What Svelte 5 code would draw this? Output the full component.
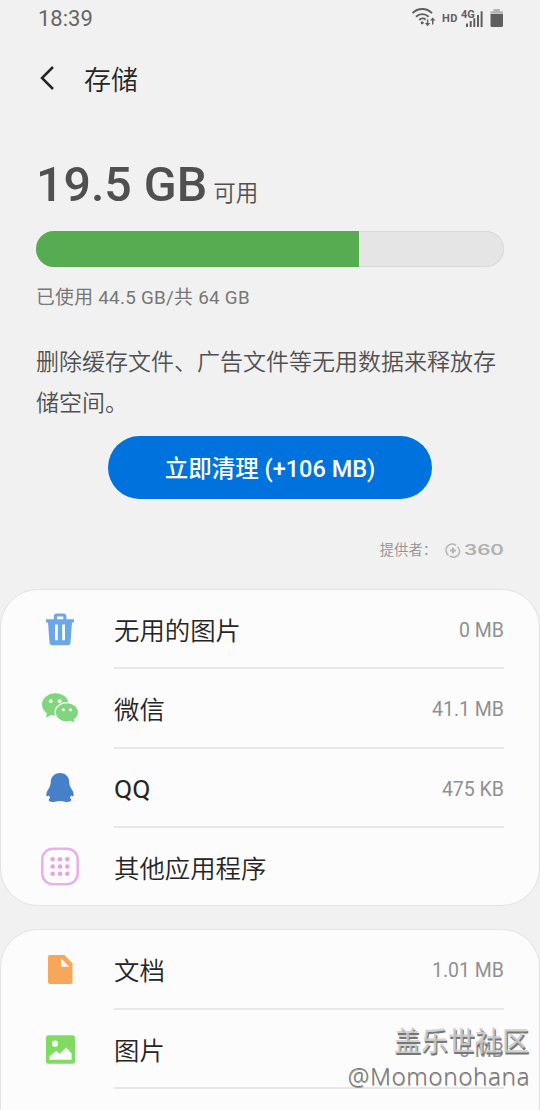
<script lang="ts">
	type Row = { icon: string; label: string; size: string };

	const used = 44.5;
	const total = 64;
	const free = 19.5;
	const fill = 69;

	const cleanup: Row[] = [
		{ icon: 'trash', label: '无用的图片', size: '0 MB' },
		{ icon: 'wechat', label: '微信', size: '41.1 MB' },
		{ icon: 'qq', label: 'QQ', size: '475 KB' },
		{ icon: 'apps', label: '其他应用程序', size: '' }
	];

	const files: Row[] = [
		{ icon: 'doc', label: '文档', size: '1.01 MB' },
		{ icon: 'image', label: '图片', size: '0 MB' },
		{ icon: '', label: '', size: '' }
	];

	const dots = [12.7, 20, 27.3];
</script>

{#snippet rowIcon(name: string)}
	<svg class="row-icon" viewBox="0 0 40 40" aria-hidden="true">
		{#if name === 'trash'}
			<path
				fill="#6ca8e8"
				fill-rule="evenodd"
				d="M6 9.3h7.8V6.4a3 3 0 0 1 3-3h6.6a3 3 0 0 1 3 3v2.9H34v3.2h-2l-1.5 20.3a2.5 2.5 0 0 1-2.5 2.4H12a2.5 2.5 0 0 1-2.5-2.4L8 12.5H6zM17 9.3h6.3V6.5H17zM15 14.5v15.7h2.8V14.5zM22.2 14.5v15.7H25V14.5z"
			/>
		{:else if name === 'wechat'}
			<path
				fill="#80d67d"
				d="M15.5 4.3C8 4.3 2 9.2 2 15.5c0 3.6 1.9 6.7 4.9 8.8L6 28.8l5.2-2.7c1.4.4 2.8.5 4.3.5 7.500 0 13.300-5 13.300-11.100S23 4.300 15.500 4.300z"
			/>
			<path
				fill="#80d67d"
				stroke="#fcfcfc"
				stroke-width="1.3"
				d="M26.8 13.6c-6.5 0-11.7 4.3-11.7 9.7s5.2 9.7 11.7 9.7c1.3 0 2.6-.2 3.7-.5l5 2.4-1.1-4.2c2.6-1.7 4.2-4.4 4.2-7.4 0-5.4-5.3-9.7-11.8-9.7z"
			/>
			<g fill="#fcfcfc">
				<circle cx="10.8" cy="12.2" r="1.9" />
				<circle cx="19.6" cy="12.2" r="1.9" />
				<circle cx="23.3" cy="20.8" r="1.5" />
				<circle cx="30.6" cy="20.8" r="1.5" />
			</g>
		{:else if name === 'qq'}
			<path
				fill="#477fc9"
				d="M20 4c-5.6 0-9.3 4-9.3 9.6 0 2-.6 3.3-1.3 4.9-1.7 2.7-3.3 5-3.1 7.6.1 1.5 1.2 1.6 2.7.5.3.9.7 1.5 1.2 2.1-1 .7-1.5 1.4-1.5 2.2 0 2.4 7.1 2.4 9.8 1.2.8-.2 2.2-.2 3 0 2.7 1.2 9.8 1.2 9.8-1.2 0-.8-.5-1.5-1.5-2.2.5-.6.9-1.2 1.2-2.1 1.5 1.1 2.6 1 2.7-.5.2-2.6-1.4-4.9-3.1-7.6-.7-1.6-1.3-2.9-1.3-4.9C29.3 8 25.6 4 20 4z"
			/>
		{:else if name === 'apps'}
			<rect
				x="2.3"
				y="1.8"
				width="35.4"
				height="35.4"
				rx="10.5"
				fill="none"
				stroke="#e9b2e6"
				stroke-width="2.6"
			/>
			{#each dots as y}
				{#each dots as x}
					<circle cx={x} cy={y - 0.5} r="2.3" fill="#e5a5e1" />
				{/each}
			{/each}
		{:else if name === 'doc'}
			<path
				fill="#f7a75a"
				d="M10 5h14.5l8 8.3V32a2 2 0 0 1-2 2H10a2 2 0 0 1-2-2V7a2 2 0 0 1 2-2z"
			/>
			<path fill="#fcfcfc" d="M21.2 8.5v8.2h7.9z" />
		{:else if name === 'image'}
			<rect x="6" y="5.3" width="29" height="28.5" rx="2.5" fill="#80dc60" />
			<circle cx="15" cy="13.7" r="3.1" fill="#fcfcfc" />
			<path fill="#fcfcfc" d="M9.5 29.8v-3.6l6.8-5.5 3.5 3 6.4-6.1 5.4 5.8v6.4z" />
		{/if}
	</svg>
{/snippet}

{#snippet card(rows: Row[])}
	<section class="card">
		{#each rows as row}
			<div class="row">
				{@render rowIcon(row.icon)}
				<div class="row-body">
					<span class="label" class:latin={row.label === 'QQ'}>{row.label}</span>
					<span class="size">{row.size}</span>
				</div>
			</div>
		{/each}
	</section>
{/snippet}

<main class="screen">
	<div class="status">
		<span class="time">18:39</span>
		<svg class="status-icons" viewBox="0 0 96 24" aria-hidden="true">
			<g fill="none" stroke="#5f5f5f" stroke-width="1.9">
				<path d="M1.5 9.2a13.5 13.5 0 0 1 19.5 0" />
				<path d="M5 12.7a9 9 0 0 1 12.6 0" />
				<path d="M8.3 16a4.6 4.6 0 0 1 6.3-.4" />
				<path d="M16.6 15.5v5M21.7 20.5v-5" stroke-width="1.4" />
			</g>
			<g fill="#5f5f5f">
				<circle cx="11.2" cy="18.7" r="1.5" />
				<path d="M13.9 19h5.4l-2.7 3.3zM19 16.6h5.4l-2.7-3.2z" />
				<path d="M55 19.5h2V23h-2zM58.7 17h2v6h-2zM62.3 14.2h2V23h-2zM66 11h2v12h-2zM69.6 7.2h2V23h-2z" />
				<path d="M79.5 10H92v11.5a1.5 1.5 0 0 1-1.5 1.5H81a1.5 1.5 0 0 1-1.5-1.5z" />
			</g>
			<path fill="#b5b5b5" d="M79.5 9.8V7.3h3V5H89v2.3h3v2.5z" />
			<text x="31" y="17.6" class="tiny" textLength="15.5">HD</text>
			<text x="50" y="13.5" class="tiny">4G</text>
		</svg>
	</div>

	<header>
		<svg class="back" viewBox="0 0 18 28" aria-hidden="true">
			<path d="M15 3L4 14l11 11" fill="none" stroke="#252525" stroke-width="2.5" />
		</svg>
		<h1>存储</h1>
	</header>

	<section class="summary">
		<p class="free"><strong>{free} GB</strong><span>可用</span></p>
		<div class="bar"><div class="bar-fill" style="width: {fill}%"></div></div>
		<p class="used">已使用 {used} GB/共 {total} GB</p>
		<p class="hint">删除缓存文件、广告文件等无用数据来释放存储空间。</p>
		<button>立即清理 (+106 MB)</button>
		<div class="provider">
			<span>提供者：</span>
			<svg viewBox="0 0 60 16" aria-label="360">
				<g fill="none" stroke="#b5b5b5">
					<path d="M4.5 13.3A6 6 0 0 1 12 3.3M13.5 4.7a6 6 0 0 1-7.7 9.2" stroke-width="1.5" />
					<path d="M9 5.6v6M6 8.6h6" stroke-width="2" />
				</g>
				<text x="20" y="13.3" textLength="40" lengthAdjust="spacingAndGlyphs">360</text>
			</svg>
		</div>
	</section>

	{@render card(cleanup)}
	{@render card(files)}

	<div class="watermark">
		<p class="site">盖乐世社区</p>
		<p class="user">@Momonohana</p>
	</div>
</main>

<style>
	:global(body) {
		background: #f1f1f1;
	}

	.screen {
		position: relative;
		width: 540px;
		height: 1110px;
		overflow: hidden;
		background: #f1f1f1;
		color: #252525;
		font-family: Roboto, 'Noto Sans CJK SC', sans-serif;
	}

	p,
	h1 {
		margin: 0;
		font-weight: 400;
	}

	.status {
		display: flex;
		align-items: center;
		justify-content: space-between;
		height: 38px;
		padding: 0 33px 0 38px;
	}

	.time {
		color: #666;
		font-size: 22px;
		line-height: 38px;
	}

	.status-icons {
		width: 96px;
		height: 24px;
		margin-bottom: 6px;
	}

	.tiny {
		fill: #5f5f5f;
		font-size: 11px;
		font-weight: 700;
	}

	header {
		display: flex;
		align-items: center;
		height: 80px;
		padding-left: 38px;
	}

	.back {
		width: 18px;
		height: 28px;
	}

	h1 {
		margin: 6px 0 0 28px;
		font-size: 27px;
		font-weight: 350;
		line-height: 40px;
	}

	.summary {
		display: flex;
		flex-direction: column;
		height: 471px;
		padding: 0 36px;
	}

	.free {
		height: 113px;
		padding-top: 39px;
		box-sizing: border-box;
		color: #505050;
		line-height: 56px;
	}

	.free strong {
		font-size: 48.3px;
		font-weight: 500;
	}

	.free span {
		margin-left: 6px;
		font-size: 22.5px;
		font-weight: 350;
	}

	.bar {
		height: 36px;
		border-radius: 18px;
		background: #e5e5e5;
		box-shadow: inset 0 0 0 1px #d9d9d9;
		overflow: hidden;
	}

	.bar-fill {
		height: 100%;
		background: #57ac52;
	}

	.used {
		margin-top: 16px;
		color: #777;
		font-size: 18.8px;
		letter-spacing: 0.3px;
		line-height: 31px;
	}

	.hint {
		margin-top: 28px;
		color: #505050;
		font-size: 23px;
		font-weight: 350;
		line-height: 41px;
	}

	button {
		align-self: center;
		flex: none;
		width: 324px;
		height: 63px;
		margin-top: 12px;
		padding: 0 0 2px;
		border: 0;
		border-radius: 32px;
		background: #0072de;
		color: #fff;
		font-family: inherit;
		font-size: 23.5px;
		font-weight: 500;
	}

	.provider {
		display: flex;
		align-items: center;
		justify-content: flex-end;
		height: 20px;
		margin-top: 41px;
		color: #929292;
		font-size: 14.3px;
		font-weight: 350;
		line-height: 20px;
	}

	.provider svg {
		width: 60px;
		height: 16px;
		margin-left: 7px;
	}

	.provider text {
		fill: #b0b0b0;
		font-family: Inter, sans-serif;
		font-size: 14px;
		font-weight: 600;
	}

	.card {
		margin-bottom: 23.4px;
		border: 1px solid #e3e3e3;
		border-radius: 38px;
		background: #fcfcfc;
		overflow: hidden;
	}

	.row {
		display: flex;
		align-items: center;
		height: 79.3px;
		padding: 0 35px 0 39px;
	}

	.row:last-child {
		height: 77px;
	}

	.row-icon {
		flex: none;
		width: 40px;
		height: 40px;
		margin-top: 1px;
	}

	.row-body {
		display: flex;
		flex: 1;
		align-items: center;
		justify-content: space-between;
		height: 100%;
		margin-left: 34px;
		padding-top: 1px;
		box-sizing: border-box;
		border-bottom: 2px solid #e7e7e7;
	}

	.row:last-child .row-body {
		padding-top: 1px;
		border: 0;
	}

	.label {
		font-size: 25.4px;
		font-weight: 350;
	}

	.latin {
		padding-top: 1px;
		font-size: 26.5px;
		font-weight: 400;
	}

	.size {
		padding-top: 3px;
		color: #909090;
		font-size: 19.5px;
	}

	.watermark {
		position: absolute;
		right: 11px;
		bottom: 17px;
		text-align: right;
	}

	.site {
		color: rgba(205, 205, 205, 0.85);
		font-size: 27px;
		font-weight: 500;
		line-height: 33px;
		text-shadow: 1px 1.5px 0 #777;
	}

	.user {
		margin-right: -1px;
		color: #777;
		font-family: 'Open Sans', 'Noto Sans', sans-serif;
		font-size: 24px;
		font-weight: 300;
		letter-spacing: 0.8px;
		line-height: 34px;
		text-shadow: 0.5px 0.5px 0 #999;
	}
</style>
